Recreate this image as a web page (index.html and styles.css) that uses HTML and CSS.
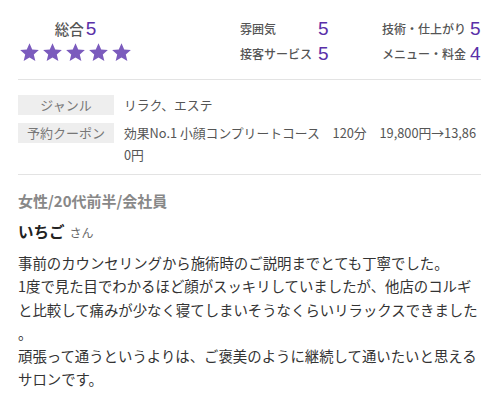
FILE: index.html
```html
<!DOCTYPE html>
<html lang="ja">
<head>
<meta charset="utf-8">
<link rel="stylesheet" href="styles.css">
</head>
<body>
<div class="page">
  <section class="ratings">
    <div class="total">
      <div class="total-title">総合<span class="num">5</span></div>
      <div class="stars">
        <svg viewBox="0 0 24 24"><path d="M12 1.5l3.1 7 7.6.7-5.8 5 1.8 7.5L12 17.8 5.3 21.7l1.8-7.5-5.8-5 7.6-.7z"/></svg>
        <svg viewBox="0 0 24 24"><path d="M12 1.5l3.1 7 7.6.7-5.8 5 1.8 7.5L12 17.8 5.3 21.7l1.8-7.5-5.8-5 7.6-.7z"/></svg>
        <svg viewBox="0 0 24 24"><path d="M12 1.5l3.1 7 7.6.7-5.8 5 1.8 7.5L12 17.8 5.3 21.7l1.8-7.5-5.8-5 7.6-.7z"/></svg>
        <svg viewBox="0 0 24 24"><path d="M12 1.5l3.1 7 7.6.7-5.8 5 1.8 7.5L12 17.8 5.3 21.7l1.8-7.5-5.8-5 7.6-.7z"/></svg>
        <svg viewBox="0 0 24 24"><path d="M12 1.5l3.1 7 7.6.7-5.8 5 1.8 7.5L12 17.8 5.3 21.7l1.8-7.5-5.8-5 7.6-.7z"/></svg>
      </div>
    </div>
    <div class="detail">
      <div class="item c1"><span class="lbl">雰囲気</span><span class="val">5</span></div>
      <div class="item c2"><span class="lbl">技術・仕上がり</span><span class="val">5</span></div>
      <div class="item c1"><span class="lbl">接客サービス</span><span class="val">5</span></div>
      <div class="item c2"><span class="lbl">メニュー・料金</span><span class="val">4</span></div>
    </div>
  </section>
  <section class="info">
    <div class="row"><div class="key">ジャンル</div><div class="value">リラク、エステ</div></div>
    <div class="row"><div class="key">予約クーポン</div><div class="value">効果No.1 小顔コンプリートコース　120分　19,800円→13,860円</div></div>
  </section>
  <section class="review">
    <div class="profile">女性/20代前半/会社員</div>
    <div class="name">いちご<span class="san">さん</span></div>
    <p class="body">事前のカウンセリングから施術時のご説明までとても丁寧でした。<br>1度で見た目でわかるほど顔がスッキリしていましたが、他店のコルギと比較して痛みが少なく寝てしまいそうなくらいリラックスできました。<br>頑張って通うというよりは、ご褒美のように継続して通いたいと思えるサロンです。</p>
  </section>
</div>
</body>
</html>
```
FILE: styles.css
```css
html, body {
  margin: 0;
  padding: 0;
  background: #fff;
}
body {
  font-family: "Noto Sans CJK JP", "Noto Sans", sans-serif;
  color: #333;
}
.page {
  padding: 0 19px 0 18px;
}
.ratings {
  display: flex;
  height: 79px;
  border-bottom: 1px solid #e3e3e3;
}
.total {
  width: 115px;
  display: flex;
  flex-direction: column;
  align-items: center;
  padding-top: 18px;
}
.total-title {
  font-size: 14.5px;
  color: #555;
  line-height: 22px;
  font-weight: 500;
}
.total-title .num {
  font-family: "Liberation Sans", sans-serif;
  font-size: 19px;
  color: #5a2fa8;
  margin-left: 2px;
}
.stars {
  display: flex;
  gap: 2px;
  margin-top: 2px;
}
.stars svg {
  width: 21px;
  height: 21px;
  fill: #7b5bbd;
}
.detail {
  margin-left: 107px;
  padding-top: 16px;
  display: grid;
  grid-template-columns: 142px auto;
  grid-auto-rows: 25px;
}
.item {
  display: flex;
  align-items: center;
}
.lbl {
  font-size: 12px;
  color: #555;
  font-weight: 500;
}
.c1 .lbl { width: 78px; }
.c2 .lbl { width: 88px; }
.val {
  font-family: "Liberation Sans", sans-serif;
  font-size: 19px;
  color: #5a2fa8;
}
.info {
  padding: 15px 0 8px;
  border-bottom: 1px solid #e3e3e3;
  display: flex;
  flex-direction: column;
  gap: 7px;
}
.row {
  display: flex;
  align-items: flex-start;
}
.key {
  width: 96px;
  flex: none;
  height: 20px;
  background: #eeeeee;
  color: #777;
  font-size: 13px;
  line-height: 20px;
  text-align: center;
}
.value {
  margin-left: 10px;
  font-size: 12.8px;
  color: #555;
  line-height: 22px;
  margin-top: -1px;
  line-break: anywhere;
}
.review {
  padding-top: 16px;
}
.profile {
  font-size: 15px;
  font-weight: 700;
  color: #888;
  line-height: 20px;
}
.name {
  margin-top: 10px;
  font-size: 15.5px;
  font-weight: 700;
  color: #222;
  line-height: 20px;
}
.san {
  font-size: 12px;
  font-weight: 400;
  color: #666;
  margin-left: 5px;
}
.body {
  margin: 8px 0 0;
  font-size: 14.4px;
  line-height: 23.3px;
  color: #333;
  line-break: anywhere;
}
```
